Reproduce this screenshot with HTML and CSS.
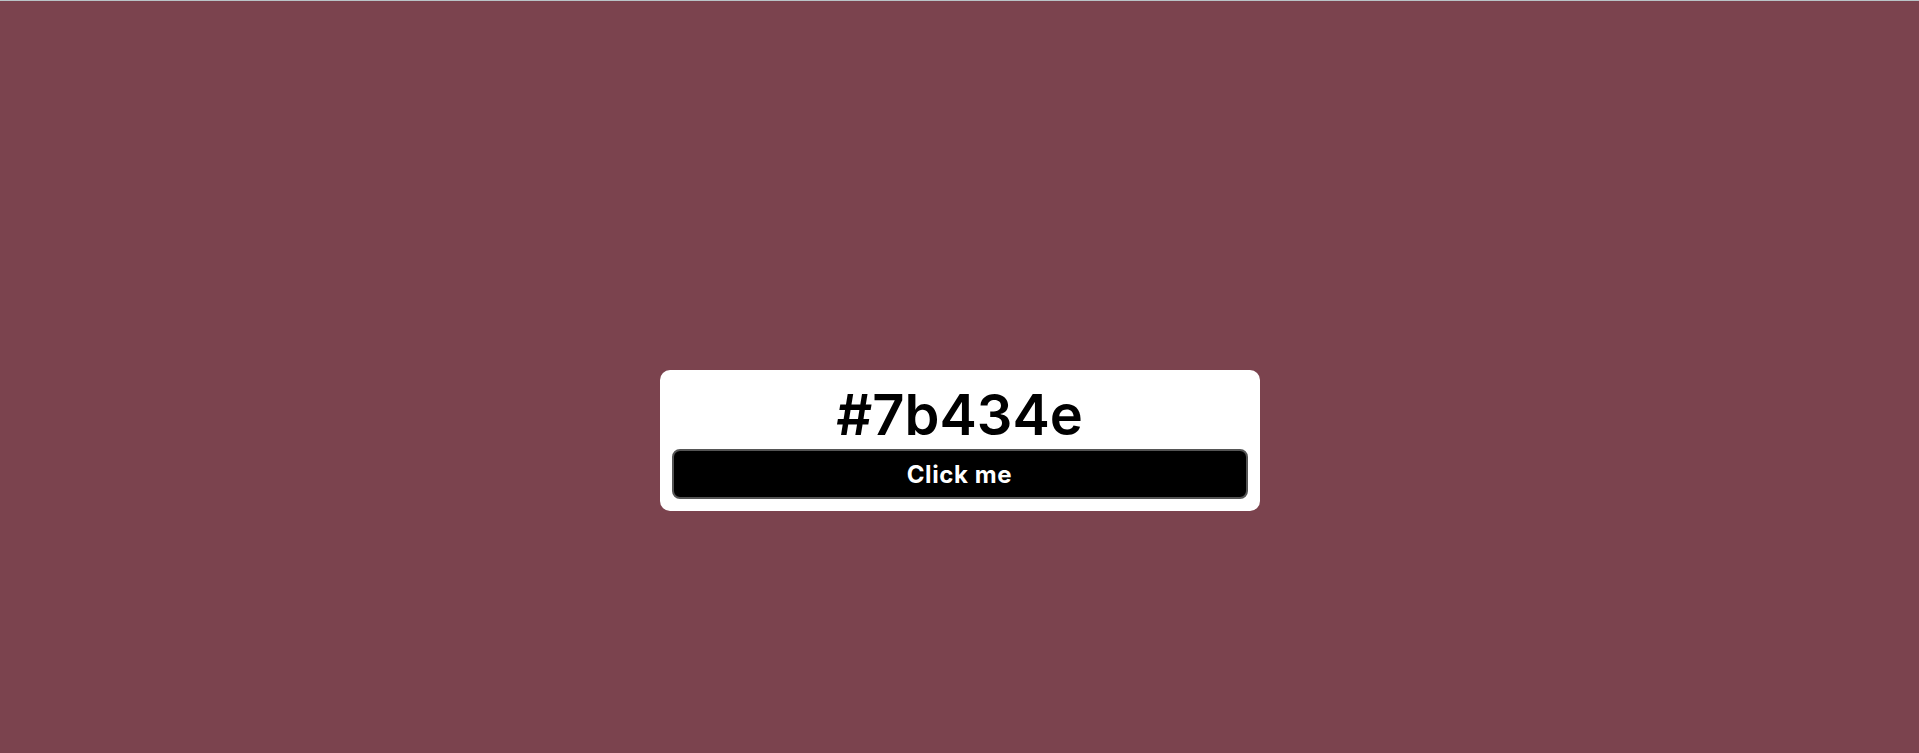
FILE: index.html
```html
<!DOCTYPE html>
<html>
<head>
<meta charset="utf-8">
<link rel="stylesheet" href="styles.css">
</head>
<body>
<main class="page">
  <div class="card">
    <h1 class="hex">#7b434e</h1>
    <button class="btn">Click me</button>
  </div>
</main>
</body>
</html>
```
FILE: styles.css
```css
html, body {
  margin: 0;
  padding: 0;
  height: 100%;
}
body {
  background: #7b434e;
  border-top: 1px solid #b9c4c7;
  box-sizing: border-box;
  font-family: "Inter", "Liberation Sans", sans-serif;
}
.page {
  display: flex;
  flex-direction: column;
  align-items: center;
  padding-top: 369px;
}
.card {
  width: 600px;
  height: 141px;
  box-sizing: border-box;
  background: #ffffff;
  border-radius: 10px;
  padding: 12px;
  display: flex;
  flex-direction: column;
}
.hex {
  margin: 0;
  height: 67px;
  line-height: 67px;
  font-size: 56px;
  font-weight: 600;
  text-align: center;
  color: #000;
  letter-spacing: 0;
}
.btn {
  height: 51px;
  width: 100%;
  box-sizing: border-box;
  background: #000;
  color: #fff;
  border: 2px solid #555;
  border-radius: 8px;
  font-family: "Inter", "Liberation Sans", sans-serif;
  font-size: 24px;
  font-weight: 700;
  letter-spacing: 0.6px;
  cursor: pointer;
}
```
